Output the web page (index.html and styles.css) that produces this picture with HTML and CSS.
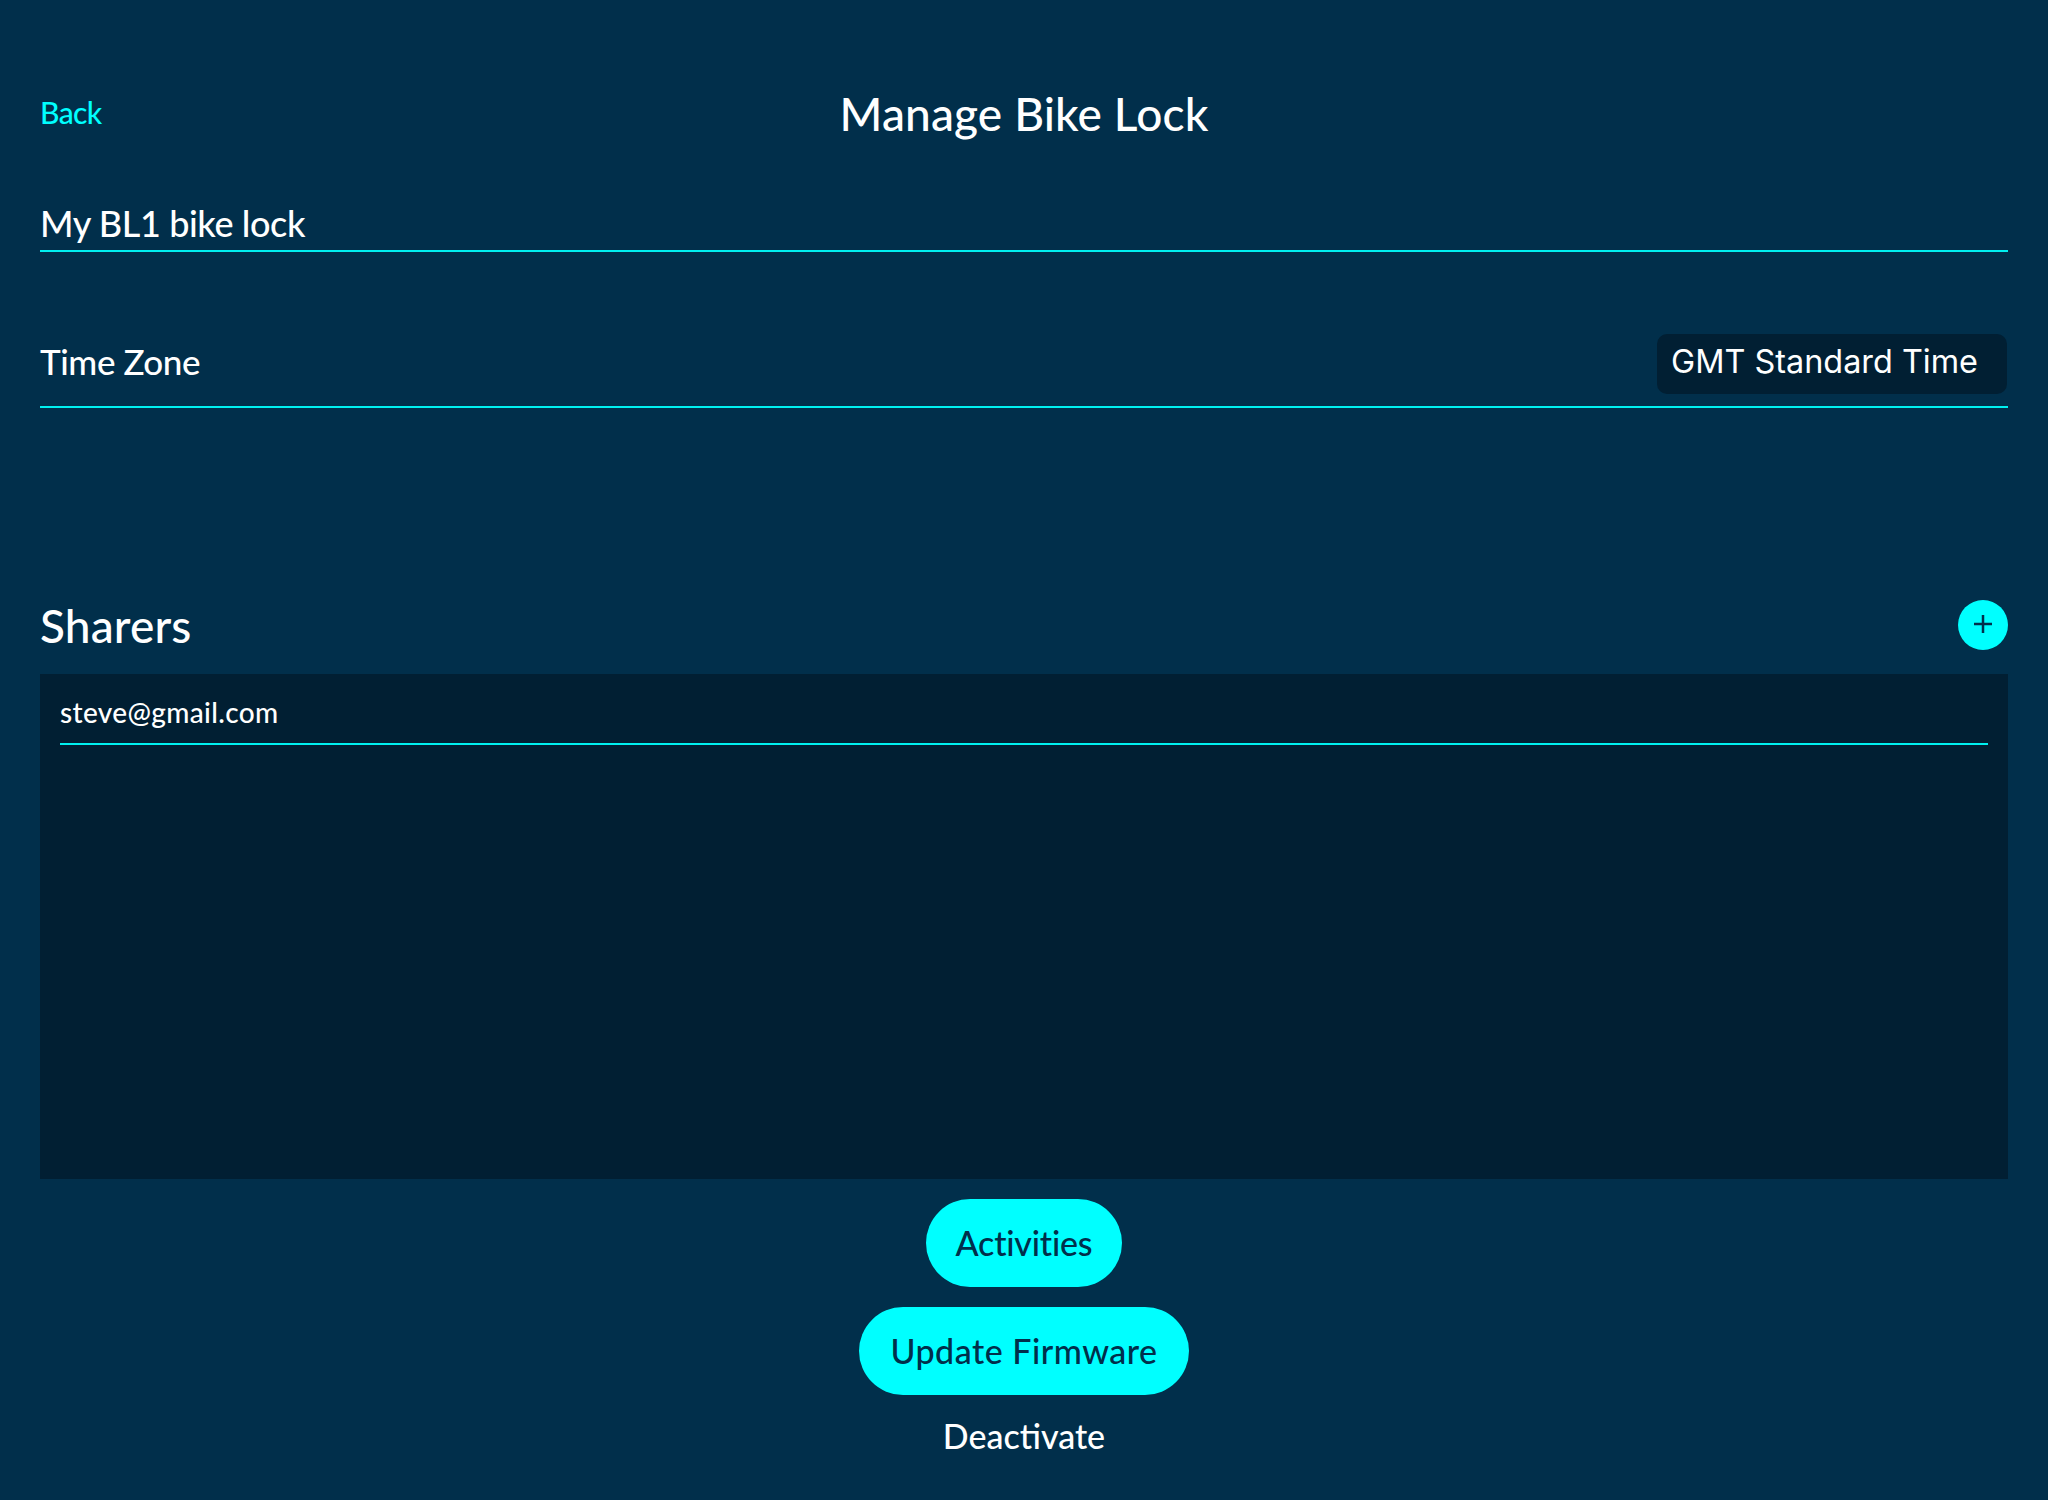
FILE: index.html
```html
<!DOCTYPE html>
<html lang="en">
<head>
<meta charset="utf-8">
<title>Manage Bike Lock</title>
<link rel="stylesheet" href="styles.css">
</head>
<body>
<main class="page">
  <header class="topbar">
    <a class="back" href="#">Back</a>
    <h1 class="title">Manage Bike Lock</h1>
  </header>
  <div class="name-field"><span class="name-text">My BL1 bike lock</span></div>
  <div class="zone-row">
    <span class="zone-label">Time Zone</span>
    <div class="zone-select">GMT Standard Time</div>
  </div>
  <section class="sharers">
    <div class="sharers-head">
      <h2 class="sharers-title">Sharers</h2>
      <button class="add" type="button" aria-label="Add sharer">
        <svg class="add-icon" viewBox="0 0 18 18" width="18" height="18"><path d="M9 0V18M0 9H18" fill="none" stroke="#012f4b" stroke-width="2.5"/></svg>
      </button>
    </div>
    <div class="sharers-panel">
      <div class="sharer-row">steve@gmail.com</div>
    </div>
  </section>
  <div class="actions">
    <button class="pill pill-activities" type="button">Activities</button>
    <button class="pill pill-firmware" type="button">Update Firmware</button>
    <a class="deactivate" href="#">Deactivate</a>
  </div>
</main>
</body>
</html>
```
FILE: styles.css
```css
* { box-sizing: border-box; }
html, body { margin: 0; height: 100%; }
body { background: #012f4b; color: #fff; font-family: "Lato", "Liberation Sans", sans-serif; font-weight: 500; }
.page { height: 1500px; padding: 88px 40px 0; display: flex; flex-direction: column; overflow: hidden; }
.topbar { position: relative; height: 52px; display: flex; align-items: center; justify-content: center; }
.back { position: absolute; left: 0; top: 5px; color: #00ffff; font-size: 30px; line-height: 38px; letter-spacing: -0.6px; text-decoration: none; }
.title { margin: 0; font-size: 46px; line-height: 52px; font-weight: 500; letter-spacing: 0.15px; }
.name-field { margin-top: 50px; height: 62px; border-bottom: 2px solid #00f0f0; display: flex; align-items: flex-end; padding-bottom: 2px; }
.name-text { font-size: 36px; line-height: 50px; letter-spacing: -0.4px; }
.zone-row { margin-top: 60px; height: 96px; border-bottom: 2px solid #00f0f0; display: flex; justify-content: space-between; align-items: flex-start; padding-top: 20px; }
.zone-label { font-size: 35px; line-height: 58px; letter-spacing: -0.4px; }
.zone-select { width: 350px; height: 60px; margin-top: 2px; margin-right: 1px; padding-left: 14px; background: #011f33; border-radius: 10px; font-family: "Inter", sans-serif; font-weight: 400; font-size: 32.4px; line-height: 56px; }
.sharers { margin-top: 192px; }
.sharers-head { height: 74px; display: flex; justify-content: space-between; align-items: flex-start; }
.sharers-title { margin: 0; font-size: 46px; line-height: 52px; font-weight: 500; letter-spacing: 0.15px; }
.add { width: 50px; height: 50px; padding: 0 0 2px; border: 0; border-radius: 50%; background: #00ffff; display: flex; align-items: center; justify-content: center; }
.sharers-panel { height: 505px; background: #011f33; padding: 0 20px; }
.sharer-row { height: 71px; border-bottom: 2px solid #00f0f0; font-size: 28px; line-height: 76px; letter-spacing: 0.35px; }
.actions { margin-top: 20px; display: flex; flex-direction: column; align-items: center; gap: 20px; }
.pill { height: 88px; padding: 0 0 2px; border: 0; border-radius: 44px; background: #00ffff; color: #012f4b; font-family: inherit; font-weight: 500; font-size: 34px; }
.pill-activities { width: 196px; letter-spacing: -0.2px; }
.pill-firmware { width: 330px; letter-spacing: 0.5px; }
.deactivate { color: #fff; font-size: 34px; line-height: 42px; text-decoration: none; }
```
